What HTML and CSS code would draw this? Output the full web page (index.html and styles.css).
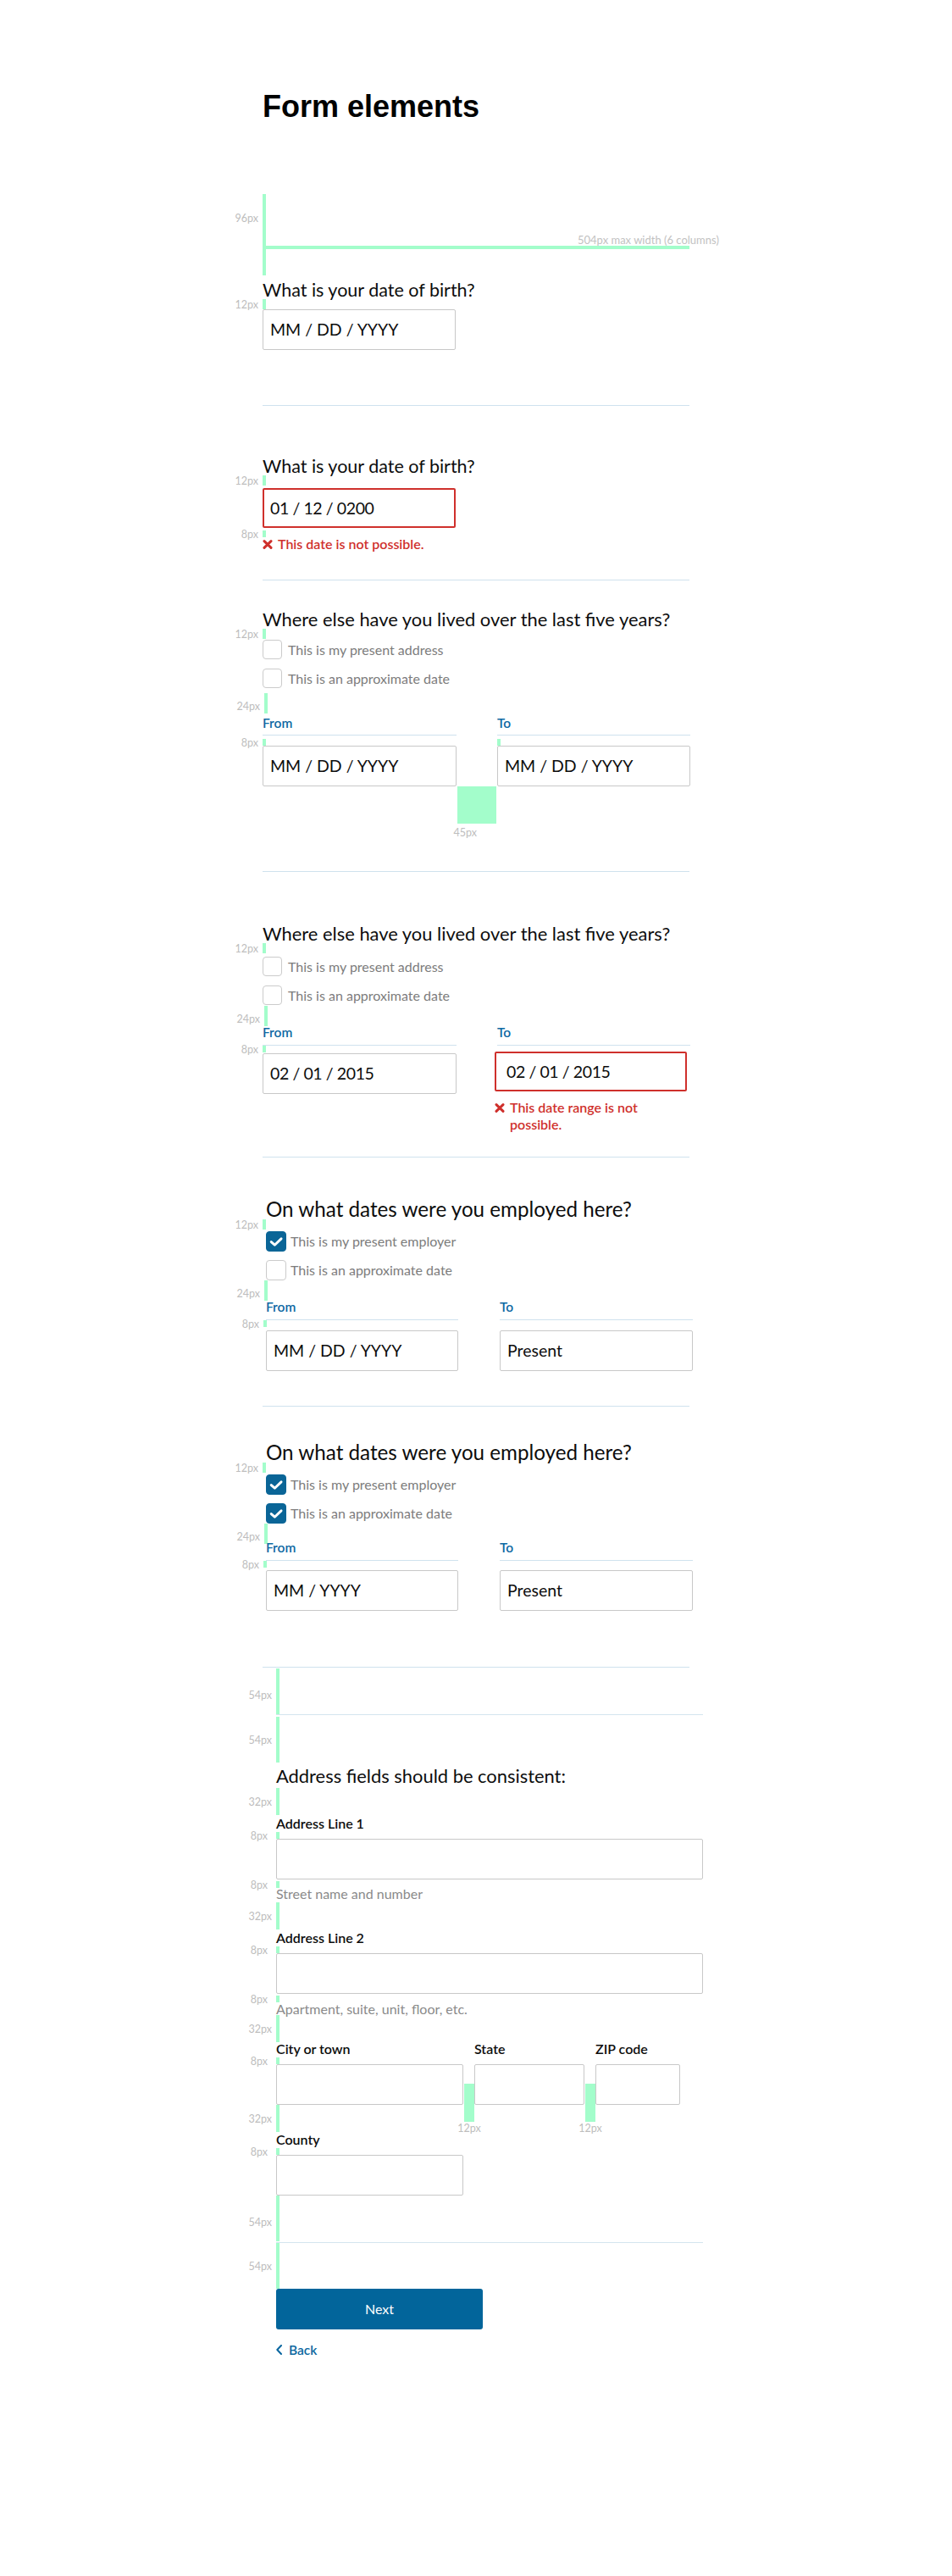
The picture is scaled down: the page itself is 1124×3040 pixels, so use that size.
FILE: index.html
```html
<!DOCTYPE html>
<html lang="en">
<head>
<meta charset="utf-8">
<title>Form elements</title>
<link rel="stylesheet" href="styles.css">
</head>
<body>
<main class="page">
  <h1 class="title">Form elements</h1>

  <div class="gap g96">
    <span class="gap-label lbl-96">96px</span>
    <div class="width-rule"></div>
    <span class="width-label">504px max width (6 columns)</span>
  </div>

  <!-- Section 1 -->
  <section class="s1">
    <h2 class="q-title">What is your date of birth?</h2>
    <div class="gap g12"><span class="gap-label">12px</span></div>
    <div class="field sm">MM / DD / YYYY</div>
  </section>
  <div class="sep sep1"></div>

  <!-- Section 2 -->
  <section class="s2">
    <h2 class="q-title">What is your date of birth?</h2>
    <div class="gap g12"><span class="gap-label">12px</span></div>
    <div class="field sm err num">01 / 12 / 0200</div>
    <div class="gap g8"><span class="gap-label">8px</span></div>
    <div class="err-msg">
      <svg class="err-ico" viewBox="0 0 12 11" aria-hidden="true"><path d="M2 1.6 L10 9.4 M10 1.6 L2 9.4" fill="none" stroke="#cf302c" stroke-width="3" stroke-linecap="round"/></svg>
      <span>This date is not possible.</span>
    </div>
  </section>
  <div class="sep sep2"></div>

  <!-- Section 3 -->
  <section class="s3">
    <h2 class="q-title">Where else have you lived over the last five years?</h2>
    <div class="gap g12"><span class="gap-label">12px</span></div>
    <div class="checks">
      <div class="check"><span class="cb"></span><span>This is my present address</span></div>
      <div class="check"><span class="cb"></span><span>This is an approximate date</span></div>
    </div>
    <div class="gap g24"><span class="gap-label low">24px</span></div>
    <div class="dates">
      <div class="date-col">
        <div class="date-label">From</div>
        <div class="gap g8"><span class="gap-label">8px</span></div>
        <div class="field">MM / DD / YYYY</div>
      </div>
      <div class="date-col">
        <div class="date-label">To</div>
        <div class="gap g8"></div>
        <div class="field">MM / DD / YYYY</div>
      </div>
      <div class="gap-block"><span class="block-label">45px</span></div>
    </div>
  </section>
  <div class="sep sep3"></div>

  <!-- Section 4 -->
  <section class="s4">
    <h2 class="q-title">Where else have you lived over the last five years?</h2>
    <div class="gap g12"><span class="gap-label">12px</span></div>
    <div class="checks">
      <div class="check"><span class="cb"></span><span>This is my present address</span></div>
      <div class="check"><span class="cb"></span><span>This is an approximate date</span></div>
    </div>
    <div class="gap g24"><span class="gap-label low">24px</span></div>
    <div class="dates">
      <div class="date-col">
        <div class="date-label">From</div>
        <div class="gap g8"><span class="gap-label">8px</span></div>
        <div class="field num">02 / 01 / 2015</div>
      </div>
      <div class="date-col">
        <div class="date-label">To</div>
        <div class="field err wide-pad num">02 / 01 / 2015</div>
        <div class="err-msg two">
          <svg class="err-ico" viewBox="0 0 12 11" aria-hidden="true"><path d="M2 1.6 L10 9.4 M10 1.6 L2 9.4" fill="none" stroke="#cf302c" stroke-width="3" stroke-linecap="round"/></svg>
          <span>This date range is not possible.</span>
        </div>
      </div>
    </div>
  </section>
  <div class="sep sep4"></div>

  <!-- Section 5 -->
  <section class="s5">
    <h2 class="q-title lg shift">On what dates were you employed here?</h2>
    <div class="gap g12"><span class="gap-label">12px</span></div>
    <div class="checks lg shift">
      <div class="check"><span class="cb on"><svg viewBox="0 0 24 24" aria-hidden="true"><path d="M5.7 12.6 L10.2 16.6 L18.6 8.6" fill="none" stroke="#fff" stroke-width="3.2" stroke-linecap="round" stroke-linejoin="round"/></svg></span><span>This is my present employer</span></div>
      <div class="check"><span class="cb"></span><span>This is an approximate date</span></div>
    </div>
    <div class="gap g24"><span class="gap-label low">24px</span></div>
    <div class="dates lg shift">
      <div class="date-col">
        <div class="date-label">From</div>
        <div class="gap g8 back3"><span class="gap-label">8px</span></div>
        <div class="field">MM / DD / YYYY</div>
      </div>
      <div class="date-col">
        <div class="date-label">To</div>
        <div class="gap g8 hidden"></div>
        <div class="field">Present</div>
      </div>
    </div>
  </section>
  <div class="sep sep5"></div>

  <!-- Section 6 -->
  <section class="s6">
    <h2 class="q-title lg shift">On what dates were you employed here?</h2>
    <div class="gap g12"><span class="gap-label">12px</span></div>
    <div class="checks lg shift">
      <div class="check"><span class="cb on"><svg viewBox="0 0 24 24" aria-hidden="true"><path d="M5.7 12.6 L10.2 16.6 L18.6 8.6" fill="none" stroke="#fff" stroke-width="3.2" stroke-linecap="round" stroke-linejoin="round"/></svg></span><span>This is my present employer</span></div>
      <div class="check"><span class="cb on"><svg viewBox="0 0 24 24" aria-hidden="true"><path d="M5.7 12.6 L10.2 16.6 L18.6 8.6" fill="none" stroke="#fff" stroke-width="3.2" stroke-linecap="round" stroke-linejoin="round"/></svg></span><span>This is an approximate date</span></div>
    </div>
    <div class="gap g24"><span class="gap-label low">24px</span></div>
    <div class="dates lg shift">
      <div class="date-col">
        <div class="date-label">From</div>
        <div class="gap g8 back3"><span class="gap-label">8px</span></div>
        <div class="field">MM / YYYY</div>
      </div>
      <div class="date-col">
        <div class="date-label">To</div>
        <div class="gap g8 hidden"></div>
        <div class="field">Present</div>
      </div>
    </div>
  </section>
  <div class="sep sep6"></div>

  <!-- Section 7: address -->
  <section class="s7 addr">
    <div class="gap g54 a1"><span class="gap-label low5">54px</span></div>
    <div class="addr-line a2"></div>
    <div class="gap g54 a3"><span class="gap-label">54px</span></div>
    <h2 class="q-title addr-title">Address fields should be consistent:</h2>
    <div class="gap g32 m3"><span class="gap-label">32px</span></div>

    <div class="addr-label m2">Address Line 1</div>
    <div class="gap g8 m2"><span class="gap-label far">8px</span></div>
    <div class="field">&nbsp;</div>
    <div class="gap g8 m2"><span class="gap-label far">8px</span></div>
    <div class="hint">Street name and number</div>
    <div class="gap g32 m3"><span class="gap-label">32px</span></div>

    <div class="addr-label m2">Address Line 2</div>
    <div class="gap g8 m2"><span class="gap-label far">8px</span></div>
    <div class="field">&nbsp;</div>
    <div class="gap g8 m2"><span class="gap-label far">8px</span></div>
    <div class="hint m1">Apartment, suite, unit, floor, etc.</div>
    <div class="gap g32"><span class="gap-label">32px</span></div>

    <div class="addr-row">
      <div class="addr-col">
        <div class="addr-label">City or town</div>
        <div class="gap g8 m2"><span class="gap-label far">8px</span></div>
        <div class="field">&nbsp;</div>
      </div>
      <div class="addr-col">
        <div class="addr-label">State</div>
        <div class="gap g8 m2 hidden"></div>
        <div class="field">&nbsp;</div>
      </div>
      <div class="addr-col">
        <div class="addr-label">ZIP code</div>
        <div class="gap g8 m2 hidden"></div>
        <div class="field">&nbsp;</div>
      </div>
      <div class="gap-block small b1"><span class="block-label centered">12px</span></div>
      <div class="gap-block small b2"><span class="block-label centered">12px</span></div>
    </div>
    <div class="gap g32"><span class="gap-label">32px</span></div>

    <div class="addr-label m1">County</div>
    <div class="gap g8 m2"><span class="gap-label far">8px</span></div>
    <div class="field county">&nbsp;</div>
    <div class="gap g54"><span class="gap-label low5">54px</span></div>
    <div class="addr-line m1"></div>
    <div class="gap g54"><span class="gap-label">54px</span></div>

    <button class="btn" type="button">Next</button>
    <a class="back" href="#">
      <svg class="chev" viewBox="0 0 7 12" aria-hidden="true"><path d="M6 1 L1.3 6 L6 11" fill="none" stroke="#0b67a0" stroke-width="2" stroke-linecap="round" stroke-linejoin="round"/></svg>
      <span>Back</span>
    </a>
  </section>
</main>
</body>
</html>
```

FILE: styles.css
```css
* { box-sizing: border-box; }

body {
  margin: 0;
  background: #fff;
  font-family: Lato, "Noto Sans", sans-serif;
  color: #111;
}

.page {
  width: 504px;
  margin: 0 auto;
  padding: 106px 0 220px;
}

.title {
  margin: 0;
  font: 700 36px/40px "Liberation Sans", Arial, sans-serif;
  color: #000;
}

/* ---------- spacing annotations ---------- */
.gap {
  position: relative;
  width: 4px;
  background: #a3fdcb;
}
.gap.hidden { background: transparent; }
.g8  { height: 8px; }
.g12 { height: 12px; }
.g24 { height: 24px; margin-left: 2px; }
.g32 { height: 32px; }
.g54 { height: 54px; }
.g96 { height: 96px; margin-top: 83px; }

.gap-label {
  position: absolute;
  right: calc(100% + 5px);
  top: 50%;
  transform: translateY(-50%);
  margin-top: 1px;
  font: 400 12.5px/14px Lato, sans-serif;
  color: #bdbdbd;
  white-space: nowrap;
}
.gap-label.low  { margin-top: 4px; }
.gap-label.low5 { margin-top: 5px; }
.gap-label.far  { right: calc(100% + 10px); }
.lbl-96 { top: 22px; transform: none; margin-top: 0; }

.width-rule {
  position: absolute;
  left: 0;
  top: 61px;
  width: 504px;
  height: 4px;
  background: #a3fdcb;
}
.width-label {
  position: absolute;
  left: 372px;
  top: 46px;
  font: 400 13px/16px Lato, sans-serif;
  color: #c2c2c2;
  white-space: nowrap;
}

.gap-block {
  position: absolute;
  left: 229.5px;
  top: 100%;
  width: 46px;
  height: 44px;
  background: #a3fdcb;
}
.block-label {
  position: absolute;
  left: -4px;
  top: calc(100% + 4px);
  font: 400 12.5px/14px Lato, sans-serif;
  color: #bdbdbd;
  white-space: nowrap;
}
.block-label.centered {
  left: 50%;
  top: calc(100% + 1px);
  transform: translateX(-50%);
}

/* ---------- generic form parts ---------- */
.q-title {
  margin: 0;
  font-weight: 400;
  font-size: 21.5px;
  line-height: 22px;
  color: #0d0d0d;
}
.q-title.lg {
  font-size: 24.2px;
  line-height: 24px;
}
.shift { margin-left: 4px; }

.field {
  height: 48px;
  border: 1px solid #c8c8c8;
  border-radius: 2px;
  padding: 0 8px;
  font-size: 19.5px;
  line-height: 46px;
  color: #0d0d0d;
  background: #fff;
  white-space: nowrap;
}
.field.num { letter-spacing: -0.4px; }
.field.sm { width: 228px; }
.field.err {
  height: 47px;
  border: 2px solid #cf302c;
  padding-left: 7px;
  line-height: 43px;
}

.err-msg {
  display: flex;
  align-items: flex-start;
  gap: 6px;
  color: #cf302c;
  font-weight: 600;
  font-size: 16px;
  line-height: 16px;
}
.err-ico {
  flex: none;
  width: 12px;
  height: 11px;
  margin-top: 3px;
}

.sep {
  height: 1px;
  background: #cfe2ee;
}

.checks {
  display: flex;
  flex-direction: column;
  gap: 11px;
}
.check {
  display: flex;
  align-items: center;
  gap: 7px;
  height: 23px;
  font-size: 16px;
  line-height: 23px;
  color: #7c7c7c;
}
.cb {
  flex: none;
  width: 23px;
  height: 23px;
  border: 1px solid #cbcbcb;
  border-radius: 4px;
  background: #fff;
}
.cb.on {
  display: flex;
  background: #0a6597;
  border-color: #0a6597;
}
.cb.on svg { width: 100%; height: 100%; }
.checks.lg { gap: 10px; }
.checks.lg .check { height: 24px; line-height: 24px; gap: 5px; }
.checks.lg .cb { width: 24px; height: 24px; }

.dates {
  position: relative;
  display: grid;
  grid-template-columns: 229px 228px;
  column-gap: 48px;
  align-items: start;
}
.dates.lg {
  grid-template-columns: 227px 228px;
  column-gap: 49px;
}
.date-label {
  font-weight: 600;
  font-size: 15.5px;
  line-height: 14px;
  color: #0f69a3;
  padding-bottom: 7px;
  border-bottom: 1px solid #cfe2ee;
}

/* ---------- section 1 ---------- */
.s1 .q-title { margin-top: 6px; }
.sep1 { margin-top: 65px; }

/* ---------- section 2 ---------- */
.s2 .q-title { margin-top: 60px; }
.s2 .field.err { margin-top: 3px; }
.s2 .g8 { margin-top: 3px; }
.sep2 { margin-top: 34px; }

/* ---------- section 3 ---------- */
.s3 .q-title { margin-top: 35px; font-size: 21.9px; }
.s3 .checks { margin-top: 1px; }
.s3 .g24 { margin-top: 6px; }
.s3 .date-label { margin-top: 4px; }
.s3 .dates .g8 { margin-top: 4px; }
.sep3 { margin-top: 100px; }

/* ---------- section 4 ---------- */
.s4 .q-title { margin-top: 62px; font-size: 21.9px; }
.s4 .checks { margin-top: 4px; }
.s4 .g24 { margin-top: 1px; }
.s4 .date-label { padding-bottom: 8px; }
.s4 .dates .field { margin-top: 1px; }
.s4 .field.err {
  margin-top: 7px;
  margin-left: -3px;
  width: 227px;
}
.s4 .field.wide-pad { padding-left: 12px; }
.err-msg.two {
  margin-top: 9px;
  margin-left: -3px;
  line-height: 20px;
}
.err-msg.two .err-ico { margin-top: 5px; }
.sep4 { margin-top: 28px; }

/* ---------- section 5 ---------- */
.s5 .q-title { margin-top: 49px; }
.s5 .checks { margin-top: 2px; }
.s5 .date-label { padding-bottom: 8px; }
.s5 .dates .field { margin-top: 4px; }
.back3 { margin-left: -3px; }
.sep5 { margin-top: 41px; }

/* ---------- section 6 ---------- */
.s6 .q-title { margin-top: 42px; }
.s6 .checks { margin-top: 2px; }
.s6 .date-label { margin-top: -3px; padding-bottom: 8px; }
.s6 .dates .field { margin-top: 3px; }
.sep6 { margin-top: 66px; }

/* ---------- section 7: address ---------- */
.addr {
  width: 504px;
  margin-left: 16px;
}
.a1 { margin-top: 1px; }
.a3 { margin-top: 2px; }
.m1 { margin-top: 1px; }
.m2 { margin-top: 2px; }
.m3 { margin-top: 3px; }

.addr-line {
  width: 504px;
  height: 1px;
  background: #d3e5ef;
}
.addr-title {
  margin-top: 5px;
  font-size: 21.9px;
}
.addr-label {
  font-weight: 600;
  font-size: 16px;
  line-height: 16px;
  color: #0d0d0d;
}
.hint {
  font-size: 16px;
  line-height: 14px;
  color: #8a8a8a;
}
.addr-row {
  position: relative;
  display: grid;
  grid-template-columns: 221px 130px 100px;
  column-gap: 13px;
}
.gap-block.small {
  top: 49px;
  width: 12px;
  height: 45px;
}
.gap-block.b1 { left: 222px; }
.gap-block.b2 { left: 365px; }
.field.county { width: 221px; }

.btn {
  display: block;
  width: 244px;
  height: 48px;
  padding: 0;
  border: 0;
  border-radius: 3px;
  background: #02659b;
  color: #fff;
  font: 400 16px/48px Lato, sans-serif;
  text-align: center;
  cursor: pointer;
}
.back {
  display: flex;
  align-items: center;
  gap: 8px;
  margin-top: 16px;
  color: #0b67a0;
  font: 600 15.5px/16px Lato, sans-serif;
  text-decoration: none;
}
.chev { width: 7px; height: 12px; flex: none; }
```
